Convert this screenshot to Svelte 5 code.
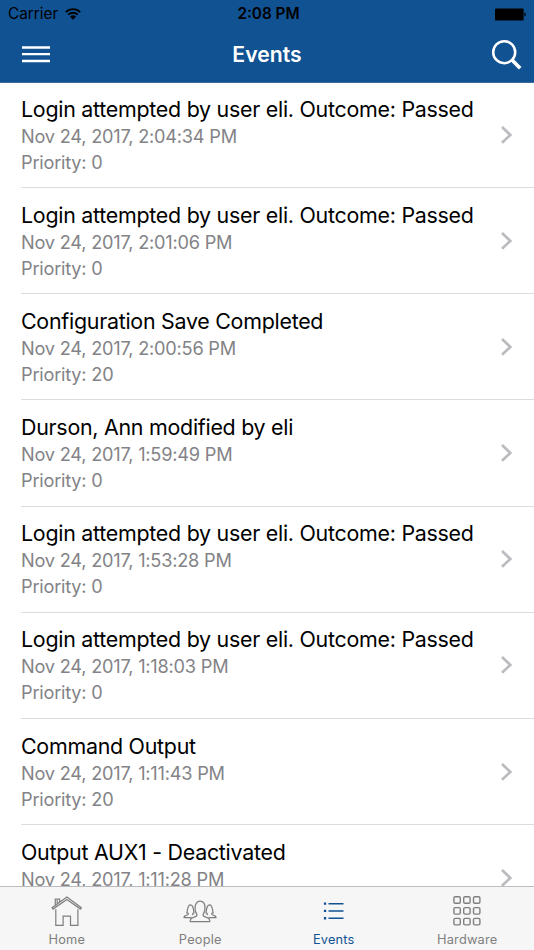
<script>
  const events = [
    { title: 'Login attempted by user eli. Outcome: Passed', time: '2:04:34 PM', priority: 0 },
    { title: 'Login attempted by user eli. Outcome: Passed', time: '2:01:06 PM', priority: 0 },
    { title: 'Configuration Save Completed', time: '2:00:56 PM', priority: 20 },
    { title: 'Durson, Ann modified by eli', time: '1:59:49 PM', priority: 0 },
    { title: 'Login attempted by user eli. Outcome: Passed', time: '1:53:28 PM', priority: 0 },
    { title: 'Login attempted by user eli. Outcome: Passed', time: '1:18:03 PM', priority: 0 },
    { title: 'Command Output', time: '1:11:43 PM', priority: 20 },
    { title: 'Output AUX1 - Deactivated', time: '1:11:28 PM', priority: 0 }
  ];
  const cells = [0, 1, 2, 3, 4, 5, 6, 7, 8];
</script>

<div class="screen">
  <header>
    <div class="status">
      <div class="carrier">
        <span>Carrier</span>
        <svg width="16" height="12" viewBox="0 0 16 12">
          <path d="M.8 4.1a10.3 10.3 0 0 1 14.4 0M3.2 6.7a6.9 6.9 0 0 1 9.6 0" fill="none" stroke="#000" stroke-width="1.8" />
          <path d="M5 8.8a4.3 4.3 0 0 1 6 0l-3 3z" fill="#000" />
        </svg>
      </div>
      <span class="clock">2:08 PM</span>
      <svg class="battery" width="32" height="13" viewBox="0 0 32 13">
        <rect x="0" y=".4" width="28.6" height="12.2" rx="1.2" />
        <path d="M29.4 4.6c2 .3 2 3.5 0 3.8z" />
      </svg>
    </div>
    <div class="nav">
      <svg class="menu" width="28" height="18" viewBox="0 0 28 18">
        <path d="M0 1.5h28M0 8.2h28M0 15h28" stroke="#fff" stroke-width="2.3" />
      </svg>
      <h1>Events</h1>
      <svg class="search" width="32" height="32" viewBox="0 0 32 32" fill="none" stroke="#fff">
        <circle cx="13.2" cy="13.2" r="11" stroke-width="2.5" />
        <path d="m21 21 8.2 8.2" stroke-width="3.7" />
      </svg>
    </div>
  </header>

  <main>
    {#each events as event}
      <article>
        <div class="copy">
          <h2>{event.title}</h2>
          <p>Nov 24, 2017, {event.time}</p>
          <p>Priority: {event.priority}</p>
        </div>
        <svg class="chevron" width="14" height="20" viewBox="0 0 14 20">
          <path d="m2 2 8.3 7.9L2 17.8" fill="none" stroke="#bbbbc0" stroke-width="2.7" />
        </svg>
      </article>
    {/each}
  </main>

  <footer>
    <div class="tab">
      <svg width="36" height="36" viewBox="0 0 36 36" fill="none" stroke="#7f7f7f" stroke-width="1.2">
        <path d="M6.8 16.2V32.3h7.3v-9.2h7.4v9.2h7.4V16.2M4 16.1l-.9-1.4L17.9 4l14.4 10.7-.9 1.4L17.9 6.4zM6.3 12V6.2h4.3v2.7M8.2 10.5V7" />
      </svg>
      <span>Home</span>
    </div>
    <div class="tab">
      <svg width="36" height="36" viewBox="0 0 36 36" fill="none" stroke="#7f7f7f" stroke-width="1.25" stroke-linejoin="round">
        <path d="M8.2 28.5c-.2-2.7 1.3-3.6 3.5-4.2 2.2-.6 3.5-1.1 3.2-3-1.3-1.5-1.9-3.3-1.9-6.4 0-4.1 1.9-6.7 5-6.7s5 2.6 5 6.7c0 3.1-.6 4.9-1.9 6.4-.3 1.9 1 2.4 3.2 3 2.2.6 3.7 1.5 3.5 4.2z" />
        <path d="M9.5 24.5H1.9c.1-2.5 3.5-1.6 4.4-3.3.4-.8-.4-1.1-1.5-1.3 1-2 .1-7.6 3.5-8.1 3.7-.1 3 5.8 3.7 8.1-1.5.3-1.7 1.1-.8 2.3M26.5 24.5h7.6c-.1-2.5-3.5-1.6-4.4-3.3-.4-.8.4-1.1 1.5-1.3-1-2-.1-7.6-3.5-8.1-3.7-.1-3 5.8-3.7 8.1 1.5.3 1.7 1.1.8 2.3" />
      </svg>
      <span>People</span>
    </div>
    <div class="tab active">
      <svg width="36" height="36" viewBox="0 0 36 36" fill="#115293">
        <path d="M7.9 9.5h2.3v2.3H7.9zm0 7.3h2.3v2.3H7.9zm0 7.3h2.3v2.3H7.9zM12.5 10h15v1.5h-15zm0 7.3h15v1.5h-15zm0 7.3h15v1.5h-15z" />
      </svg>
      <span>Events</span>
    </div>
    <div class="tab">
      <svg width="36" height="36" viewBox="0 0 36 36" fill="none" stroke="#7f7f7f" stroke-width="1.4">
        {#each cells as cell}
          <rect x={4.9 + (cell % 3) * 9.8} y={3.8 + Math.floor(cell / 3) * 10.8} width="6.4" height="6.5" rx="1.4" />
        {/each}
      </svg>
      <span>Hardware</span>
    </div>
  </footer>
</div>

<style>
  :global(body) { margin: 0; background: #fff; }
  .screen {
    width: 534px;
    height: 950px;
    display: flex;
    flex-direction: column;
    overflow: hidden;
    background: #fff;
    font-family: Inter, 'Liberation Sans', sans-serif;
  }
  svg { display: block; }
  h1, h2, p { margin: 0; font-weight: 400; white-space: nowrap; }
  header { height: 83px; flex: none; background: #115293; box-sizing: border-box; border-bottom: 1px solid #3b6b9e; }
  .status {
    height: 27px;
    display: grid;
    grid-template-columns: 1fr auto 1fr;
    align-items: center;
    padding: 0 7px 0 8px;
    font-size: 15.3px;
    line-height: 28px;
    color: #000;
  }
  .carrier { display: flex; align-items: center; gap: 7px; }
  .carrier svg { margin-top: -1px; }
  .clock { font-weight: 600; margin: 0 -1px 0 1px; }
  .battery { justify-self: end; }
  .nav {
    height: 55px;
    display: grid;
    grid-template-columns: 1fr auto 1fr;
    align-items: center;
    padding: 0 11px 0 22px;
  }
  h1 { color: #fff; font-size: 21.2px; font-weight: 600; line-height: 55px; margin-left: -11px; }
  .search { justify-self: end; }
  main { flex: 1; min-height: 0; overflow: hidden; }
  article {
    height: 106.2px;
    box-sizing: border-box;
    margin-left: 21px;
    padding: 12.6px 20px 0 0;
    border-bottom: 1px solid #dcdcde;
    display: flex;
    justify-content: space-between;
  }
  article:first-child { height: 105px; padding-top: 11.5px; }
  h2 { font-size: 21.4px; line-height: 28px; letter-spacing: -.26px; color: #000; }
  p { font-size: 18.2px; line-height: 26px; letter-spacing: -.22px; color: #838387; }
  .chevron { margin-top: 30px; flex: none; }
  footer {
    height: 64px;
    flex: none;
    box-sizing: border-box;
    display: grid;
    grid-template-columns: repeat(4, 1fr);
    background: #f6f6f6;
    border-top: 1px solid #bcbcbe;
  }
  .tab { display: flex; flex-direction: column; align-items: center; padding-top: 6px; color: #7f7f7f; }
  .tab span { font-size: 12.8px; line-height: 16px; margin-top: 3px; letter-spacing: .2px; }
  .active { color: #115293; }
</style>
